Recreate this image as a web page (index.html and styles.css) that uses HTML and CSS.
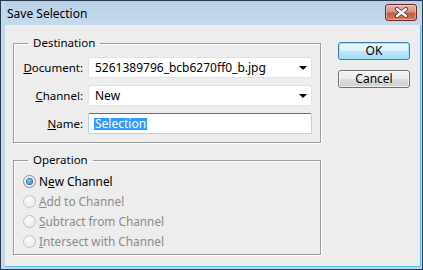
FILE: index.html
```html
<!DOCTYPE html>
<html>
<head>
    <title>Save Selection</title>
    <link rel="stylesheet" href="styles.css">
</head>
<body>
    <div class="window">
        <div class="titlebar">
            <span class="title">Save Selection</span>
            <span class="close">
                <svg width="15" height="11" viewBox="0 0 15 11">
                    <path d="M3 2 L12 9 M12 2 L3 9" stroke="#5a3030" stroke-width="4" stroke-linecap="round"/>
                    <path d="M3 2 L12 9 M12 2 L3 9" stroke="#fff" stroke-width="2.4" stroke-linecap="round"/>
                </svg>
            </span>
        </div>
        <div class="client">
            <div class="main">
                <fieldset class="group dest">
                    <legend>Destination</legend>
                    <div class="row">
                        <label><u>D</u>ocument:</label>
                        <div class="select">5261389796_bcb6270ff0_b.jpg<span class="arrow"></span></div>
                    </div>
                    <div class="row">
                        <label><u>C</u>hannel:</label>
                        <div class="select">New<span class="arrow"></span></div>
                    </div>
                    <div class="row">
                        <label><u>N</u>ame:</label>
                        <div class="textbox"><span class="selected">Selection</span></div>
                    </div>
                </fieldset>

                <fieldset class="group op">
                    <legend>Operation</legend>
                    <div class="radio checked"><span class="dot"></span>N<u>e</u>w Channel</div>
                    <div class="radio disabled"><span class="dot"></span><u>A</u>dd to Channel</div>
                    <div class="radio disabled"><span class="dot"></span><u>S</u>ubtract from Channel</div>
                    <div class="radio disabled"><span class="dot"></span><u>I</u>ntersect with Channel</div>
                </fieldset>
            </div>

            <div class="buttons">
                <button class="btn default">OK</button>
                <button class="btn">Cancel</button>
            </div>
        </div>
    </div>
</body>
</html>
```

FILE: styles.css
```css
body {
    margin: 0;
    padding: 0;
    font-family: 'Segoe UI', 'Noto Sans', sans-serif;
    font-size: 11.5px;
    color: #000;
}

.window {
    width: 423px;
    height: 270px;
    box-sizing: border-box;
    border: 1px solid #2a3a4c;
    background: #c2d7ec;
    padding: 0 1px 2px 4px;
    display: flex;
    flex-direction: column;
}

.titlebar {
    height: 24px;
    display: flex;
    align-items: center;
    justify-content: space-between;
    padding: 0 4px 0 2px;
    background: linear-gradient(#b8d0e9, #c6daee);
}

.title {
    font-size: 12px;
    line-height: 16px;
    margin-top: 1px;
}

.close {
    width: 30px;
    height: 15px;
    margin-top: -1px;
    display: flex;
    align-items: center;
    justify-content: center;
    border: 1px solid #6e2a22;
    border-radius: 3px;
    background: linear-gradient(#eab5a6 0%, #d98f7e 45%, #c65b45 55%, #cf7a63 100%);
    box-shadow: inset 0 0 0 1px rgba(255, 255, 255, 0.35);
}

.client {
    flex: 1;
    display: flex;
    gap: 17px;
    padding: 10px 0 0 8px;
    background: #ededed;
    border-right: 1px solid #52c2ea;
    border-bottom: 1px solid #52c2ea;
}

.main {
    display: flex;
    flex-direction: column;
    gap: 9px;
}

.group {
    width: 308px;
    box-sizing: border-box;
    margin: 0;
    border: 1px solid #9c9c9c;
    box-shadow: 1px 1px 0 #fff, inset 1px 1px 0 #fff;
    padding: 0 8px 8px 0;
}

.group legend {
    margin-left: 14px;
    padding: 0 5px;
    font-size: 11.5px;
    line-height: 16px;
}

.dest {
    padding-top: 6px;
    display: flex;
    flex-direction: column;
    gap: 7px;
}

.row {
    display: flex;
    align-items: center;
    gap: 5px;
}

.row label {
    width: 69px;
    text-align: right;
    font-size: 11.5px;
}

.select, .textbox {
    width: 224px;
    height: 21px;
    box-sizing: border-box;
    background: #fff;
    display: flex;
    align-items: center;
    justify-content: space-between;
    padding: 0 4px 0 6px;
    font-size: 12px;
}

.select {
    border: 1px solid #e2e2e2;
    border-radius: 2px;
}

.arrow {
    width: 0;
    height: 0;
    border-left: 4px solid transparent;
    border-right: 4px solid transparent;
    border-top: 4px solid #000;
    margin-top: 1px;
}

.textbox {
    border: 1px solid #b5d3ea;
    border-top-color: #3d7bad;
    padding-left: 5px;
    border-radius: 2px;
}

.selected {
    display: inline-block;
    background: #3399ff;
    color: #fff;
    height: 12px;
    line-height: 12px;
    padding: 0 1px;
}

.op {
    padding-top: 3px;
    padding-bottom: 3px;
}

.radio {
    height: 20px;
    display: flex;
    align-items: center;
    padding-left: 9px;
    font-size: 11.8px;
}

.dot {
    width: 11px;
    height: 11px;
    border-radius: 50%;
    border: 1px solid #8e8f8f;
    background: radial-gradient(circle at 40% 35%, #fff, #dcdcdc);
    margin-right: 3px;
    display: flex;
    align-items: center;
    justify-content: center;
}

.radio.checked .dot::after {
    content: '';
    width: 5px;
    height: 5px;
    border-radius: 50%;
    background: radial-gradient(circle at 40% 35%, #8fd6fb, #1a64a8);
    box-shadow: 0 0 0 1px #2a6fb0;
}

.radio.disabled {
    color: #8b8b8b;
}

.radio.disabled .dot {
    border-color: #c4c4c4;
    background: radial-gradient(circle at 40% 35%, #fafafa, #e6e6e6);
}

.buttons {
    display: flex;
    flex-direction: column;
    gap: 10px;
    margin-top: 7px;
}

.btn {
    width: 72px;
    height: 18px;
    padding: 0;
    font-family: 'Segoe UI', 'Noto Sans', sans-serif;
    font-size: 12px;
    line-height: 14px;
    color: #000;
    border: 1px solid #707070;
    border-radius: 3px;
    background: linear-gradient(#f2f2f2 0%, #ebebeb 50%, #dddddd 50%, #cfcfcf 100%);
    box-shadow: inset 0 0 0 1px rgba(255, 255, 255, 0.7);
}

.btn.default {
    border-color: #3c7fb1;
    background: linear-gradient(#eaf6fd 0%, #d9f0fc 50%, #bee6fd 50%, #a7d9f5 100%);
    box-shadow: inset 0 0 0 1px #9fe0fb;
}
```
